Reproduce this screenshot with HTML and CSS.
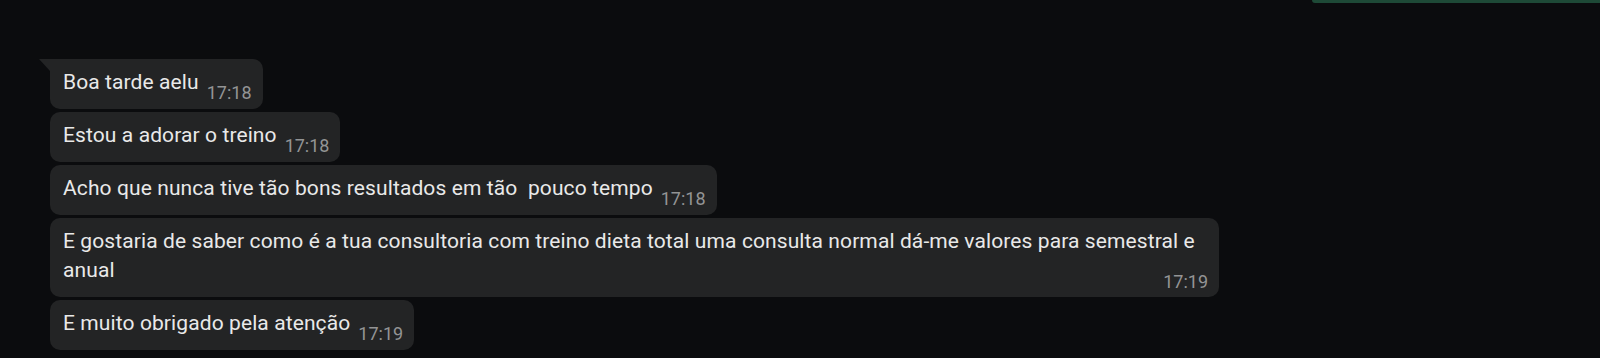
FILE: index.html
```html
<!DOCTYPE html>
<html lang="pt">
<head>
<meta charset="utf-8">
<title>Chat</title>
<link rel="stylesheet" href="styles.css">
</head>
<body>
<div class="top-bar"></div>
<div class="chat">
  <div class="bubble bubble--first"><span class="text">Boa tarde aelu</span><span class="time">17:18</span></div>
  <div class="bubble"><span class="text">Estou a adorar o treino</span><span class="time">17:18</span></div>
  <div class="bubble"><span class="text">Acho que nunca tive tão bons resultados em tão&nbsp; pouco tempo</span><span class="time">17:18</span></div>
  <div class="bubble bubble--long"><span class="text">E gostaria de saber como é a tua consultoria com treino dieta total uma consulta normal dá-me valores para semestral e anual</span><span class="time time--right">17:19</span></div>
  <div class="bubble"><span class="text">E muito obrigado pela atenção</span><span class="time">17:19</span></div>
</div>
</body>
</html>
```
FILE: styles.css
```css
html, body {
  margin: 0;
  padding: 0;
  background: #0b0c0e;
  height: 358px;
  overflow: hidden;
}
body {
  font-family: Roboto, "Liberation Sans", sans-serif;
  position: relative;
}
.top-bar {
  position: absolute;
  top: 0;
  left: 1312px;
  right: 0;
  height: 3px;
  background: #1e4a37;
  border-bottom-left-radius: 6px;
}
.chat {
  display: flex;
  flex-direction: column;
  align-items: flex-start;
  gap: 3px;
  padding: 59px 0 0 50px;
}
.bubble {
  position: relative;
  background: #232425;
  border-radius: 10px;
  padding: 9px 11px 12px 13px;
  color: #e9e9e9;
  font-size: 21px;
  line-height: 29px;
  max-width: 1145px;
}
.text {
  letter-spacing: 0.1px;
}
.bubble--first {
  border-top-left-radius: 0;
}
.bubble--first::before {
  content: "";
  position: absolute;
  top: 0;
  left: -11px;
  width: 0;
  height: 0;
  border-top: 12px solid #232425;
  border-left: 11px solid transparent;
}
.time {
  color: #939495;
  font-size: 18px;
  margin-left: 8px;
  position: relative;
  top: 10px;
}
.time--right {
  float: right;
  top: 11px;
}
```
